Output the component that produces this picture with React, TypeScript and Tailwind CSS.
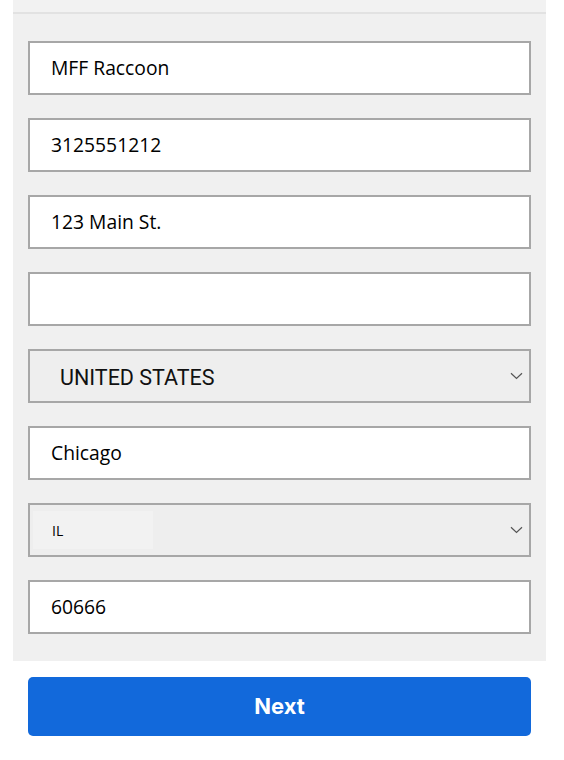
import React from 'react';

const fields = ['MFF Raccoon', '3125551212', '123 Main St.', ''];

const Chevron = () => (
  <svg width="13" height="8" viewBox="0 0 13 8" className="absolute right-[6px] top-1/2 -translate-y-1/2">
    <path d="M1 1.2 L6.5 6.5 L12 1.2" fill="none" stroke="#555" strokeWidth="1.2" />
  </svg>
);

const TextField = ({ value }: { value: string }) => (
  <div className="h-[54px] bg-white border-2 border-[#a7a7a7] flex items-center pl-[21px] text-[19.3px] text-black" style={{ fontFamily: '"Open Sans", sans-serif' }}>
    {value}
  </div>
);

export default function App() {
  return (
    <div className="w-[564px] h-[760px] bg-white">
      <div className="ml-[13px] w-[533px] bg-[#f0f0f0]">
        <div className="h-[14px] border-b-2 border-[#e2e2e2] bg-[#f2f2f2]" />
        <div className="px-[15px] pt-[27px] pb-[27px] flex flex-col gap-[23px]">
          {fields.map((f, i) => (
            <TextField key={i} value={f} />
          ))}
          <div className="relative h-[54px] bg-[#eeeeee] border-2 border-[#a7a7a7] flex items-center pl-[30px] pt-[5px] text-[21.5px] text-[#111]" style={{ fontFamily: 'Roboto, sans-serif' }}>
            UNITED STATES
            <Chevron />
          </div>
          <TextField value="Chicago" />
          <div className="relative h-[54px] bg-[#eeeeee] border-2 border-[#a7a7a7] flex items-center px-[3px] py-[6px]" style={{ fontFamily: '"Open Sans", sans-serif' }}>
            <div className="h-full w-[120px] bg-[#f2f2f2] flex items-center pl-[19px] text-[14px] text-black">IL</div>
            <Chevron />
          </div>
          <TextField value="60666" />
        </div>
      </div>
      <div className="pl-[28px] pt-[16px]">
        <button className="w-[503px] h-[59px] rounded-[5px] bg-[#1269db] text-white text-[22px] font-bold" style={{ fontFamily: 'Inter, sans-serif' }}>
          Next
        </button>
      </div>
    </div>
  );
}
